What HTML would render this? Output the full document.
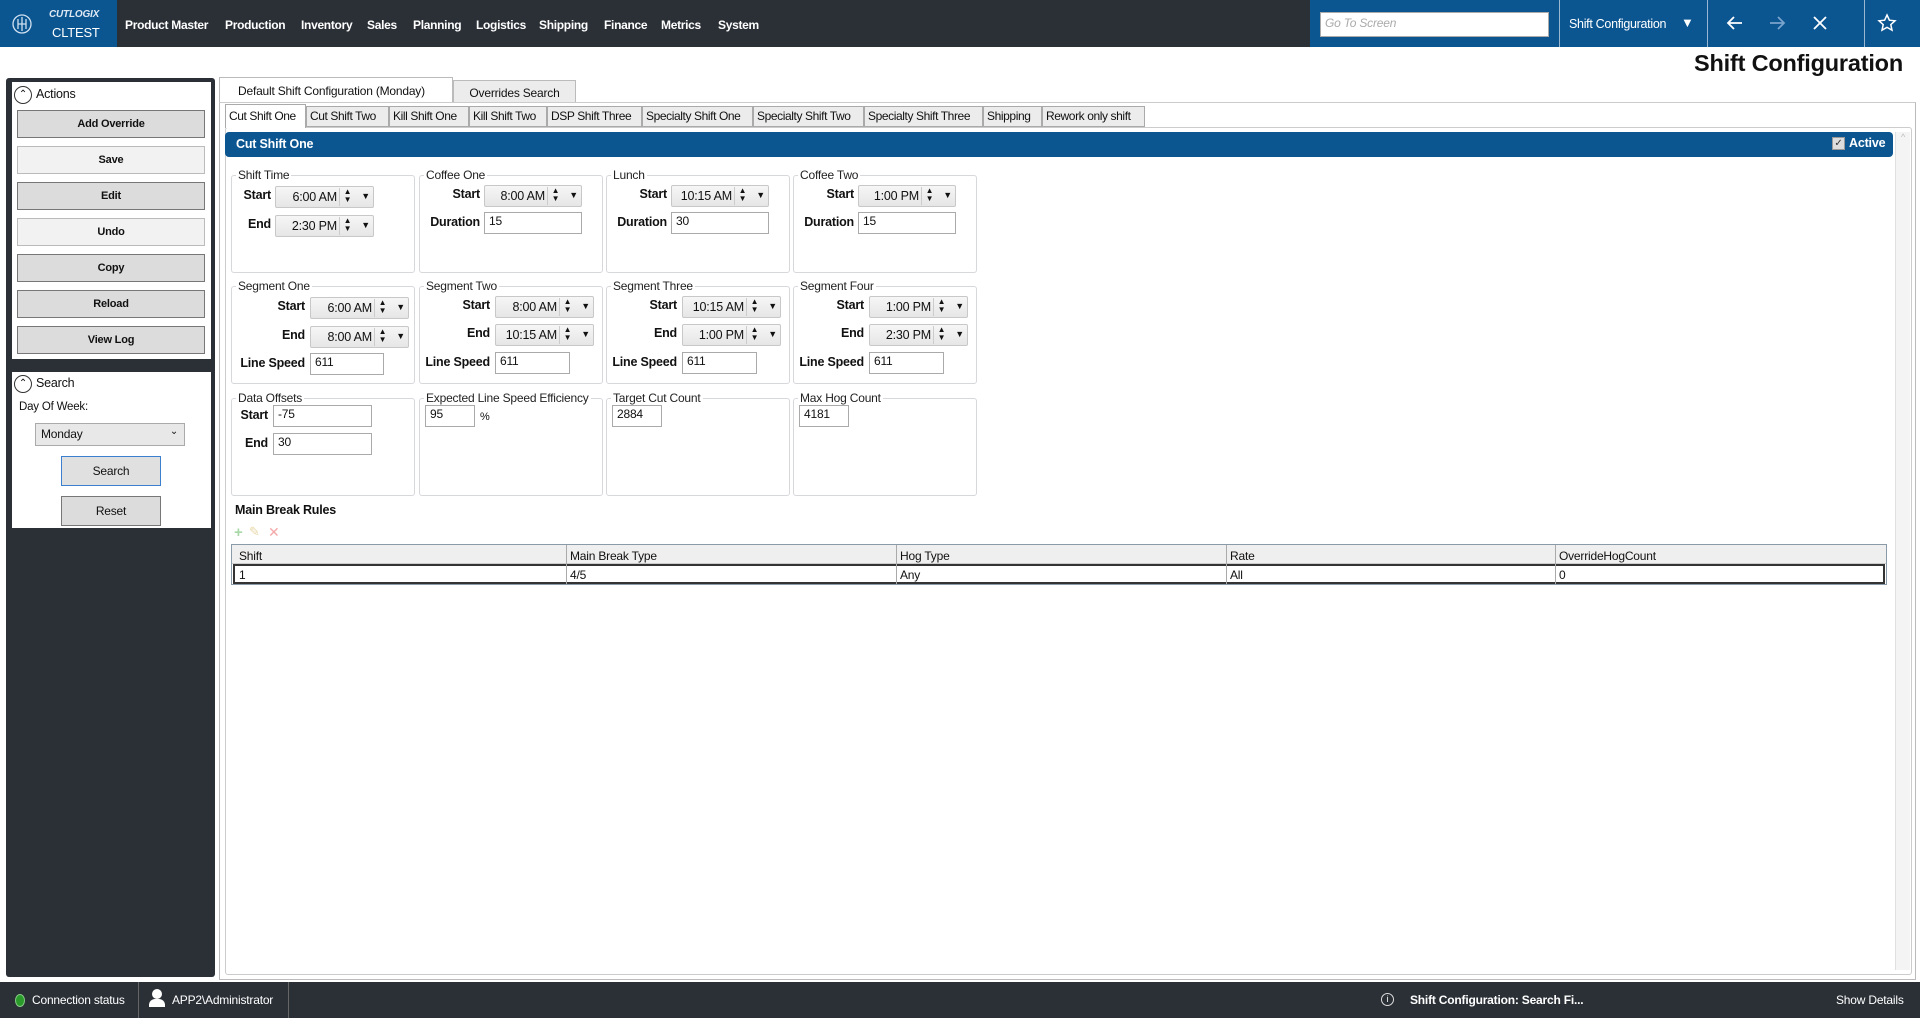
<!DOCTYPE html>
<html><head><meta charset="utf-8"><style>
*{box-sizing:border-box;margin:0;padding:0}
body{width:1920px;height:1018px;position:relative;background:#fff;font-family:"Liberation Sans",sans-serif;font-size:12px;color:#111;overflow:hidden;letter-spacing:-0.2px;white-space:nowrap}
.a{position:absolute}
.top{left:0;top:0;width:1920px;height:47px;background:#2b3037}
.menu{top:18px;color:#fff;font-weight:bold;font-size:12px;letter-spacing:-0.3px}
.blue{background:#0b5591}
.btn{position:absolute;left:17px;width:188px;height:28px;border:1px solid #777;background:#dcdcdc;font-weight:bold;font-size:11px;text-align:center;line-height:26px}
.btn.l{background:#f2f2f2;border-color:#bbb}
.gb{position:absolute;width:184px;height:105px}
.gb .fr{position:absolute;left:0;top:7px;right:0;bottom:0;border:1px solid #d6d8dc;border-radius:3px}
.gb .lg{position:absolute;left:5px;top:0;background:#fff;padding:0 2px;font-size:12px;color:#222}
.lb{position:absolute;font-weight:bold;font-size:12.5px;text-align:right}
.tb{position:absolute;height:22px;border:1px solid #c8c8c8;background:linear-gradient(#f6f6f6,#e6e6e6);border-radius:2px}
.tb .v{position:absolute;right:36px;top:3px;font-size:12.5px}
.tb .sp{position:absolute;right:18px;top:1px;width:16px;height:18px;border-left:1px solid #ccc;font-size:8px;line-height:8px;text-align:center}
.tb .dd{position:absolute;right:3px;top:4px;font-size:9px}
.in{position:absolute;height:22px;border:1px solid #aaa;background:#fff;padding:1px 4px;font-size:12px}
.tab{position:absolute;top:106px;height:21px;border:1px solid #aaa;background:#ececec;font-size:12px;line-height:19px;padding:0 3px;white-space:nowrap;letter-spacing:-0.4px}
.st{color:#fff;font-size:12px;top:993px}
</style></head><body>
<div class="a top"></div>
<div class="a blue" style="left:0;top:0;width:117px;height:47px"></div>
<svg class="a" style="left:10px;top:12px" width="24" height="24" viewBox="0 0 24 24" fill="none" stroke="#cfe0f0" stroke-width="1.3"><circle cx="12" cy="12" r="9"/><path d="M8 7v10M12 5v14M16 7v10M8 12h8"/></svg>
<div class="a" style="left:49px;top:9px;color:#dfe9f4;font-weight:bold;font-style:italic;font-size:10px">CUTLOGIX</div>
<div class="a" style="left:52px;top:25px;color:#fff;font-size:13px">CLTEST</div>
<div class="a menu" style="left:125px">Product Master</div>
<div class="a menu" style="left:225px">Production</div>
<div class="a menu" style="left:301px">Inventory</div>
<div class="a menu" style="left:367px">Sales</div>
<div class="a menu" style="left:413px">Planning</div>
<div class="a menu" style="left:476px">Logistics</div>
<div class="a menu" style="left:539px">Shipping</div>
<div class="a menu" style="left:604px">Finance</div>
<div class="a menu" style="left:661px">Metrics</div>
<div class="a menu" style="left:718px">System</div>
<div class="a blue" style="left:1310px;top:0;width:610px;height:47px"></div>
<div class="a" style="left:1320px;top:12px;width:229px;height:25px;background:#fff;border:1px solid #aaa;color:#aaa;font-style:italic;padding:3px 4px;font-size:12px">Go To Screen</div>
<div class="a" style="left:1559px;top:0;width:1px;height:47px;background:#9bb6d0"></div>
<div class="a" style="left:1569px;top:17px;color:#fff;font-size:12.5px;letter-spacing:-0.3px">Shift Configuration</div>
<div class="a" style="left:1681px;top:15px;color:#fff;font-size:13px">▼</div>
<div class="a" style="left:1707px;top:0;width:1px;height:47px;background:#9bb6d0"></div>
<svg class="a" style="left:1726px;top:14px" width="18" height="18" viewBox="0 0 18 18" fill="none" stroke="#fff" stroke-width="1.8"><path d="M16 9H2M8 3L2 9l6 6"/></svg>
<svg class="a" style="left:1768px;top:14px" width="18" height="18" viewBox="0 0 18 18" fill="none" stroke="#7aa4cc" stroke-width="1.8"><path d="M2 9h14M10 3l6 6-6 6"/></svg>
<svg class="a" style="left:1812px;top:15px" width="16" height="16" viewBox="0 0 16 16" fill="none" stroke="#fff" stroke-width="1.8"><path d="M2 2l12 12M14 2L2 14"/></svg>
<div class="a" style="left:1864px;top:0;width:1px;height:47px;background:#9bb6d0"></div>
<svg class="a" style="left:1877px;top:13px" width="20" height="20" viewBox="0 0 20 20" fill="none" stroke="#fff" stroke-width="1.5"><path d="M10 2l2.4 5.2 5.6.6-4.2 3.8 1.2 5.6L10 14.4 5 17.2l1.2-5.6L2 7.8l5.6-.6z"/></svg>
<div class="a" style="right:17px;top:50px;font-weight:bold;font-size:23.5px">Shift Configuration</div>

<div class="a" style="left:6px;top:78px;width:209px;height:899px;background:#2b3037;border-radius:3px"></div>
<div class="a" style="left:12px;top:82px;width:199px;height:277px;background:#fff"></div>
<div class="a" style="left:14px;top:86px;width:18px;height:18px;border:1px solid #333;border-radius:50%;font-size:10px;text-align:center;line-height:15px">⌃</div>
<div class="a" style="left:36px;top:87px;font-size:12.5px">Actions</div>
<div class="btn" style="top:110px">Add Override</div>
<div class="btn l" style="top:146px">Save</div>
<div class="btn" style="top:182px">Edit</div>
<div class="btn l" style="top:218px">Undo</div>
<div class="btn" style="top:254px">Copy</div>
<div class="btn" style="top:290px">Reload</div>
<div class="btn" style="top:326px">View Log</div>
<div class="a" style="left:12px;top:372px;width:199px;height:156px;background:#fff"></div>
<div class="a" style="left:14px;top:375px;width:18px;height:18px;border:1px solid #333;border-radius:50%;font-size:10px;text-align:center;line-height:15px">⌃</div>
<div class="a" style="left:36px;top:376px;font-size:12.5px">Search</div>
<div class="a" style="left:19px;top:401px;font-size:11.5px">Day Of Week:</div>
<div class="a" style="left:35px;top:423px;width:150px;height:23px;border:1px solid #aaa;background:#e8e8e8;padding:3px 5px;font-size:12px">Monday<span style="position:absolute;right:6px;top:2px;font-size:10px">⌄</span></div>
<div class="a" style="left:61px;top:456px;width:100px;height:30px;border:1px solid #3b7fd0;background:#e0e0e0;text-align:center;line-height:28px;font-size:12px">Search</div>
<div class="a" style="left:61px;top:496px;width:100px;height:30px;border:1px solid #777;background:#dcdcdc;text-align:center;line-height:28px;font-size:12px">Reset</div>

<div class="a" style="left:219px;top:77px;width:234px;height:26px;background:#fff;border:1px solid #bbb;border-bottom:none;font-size:12px;padding:6px 18px">Default Shift Configuration (Monday)</div>
<div class="a" style="left:453px;top:80px;width:123px;height:23px;background:#ececec;border:1px solid #bbb;font-size:12px;padding:5px 0;text-align:center">Overrides Search</div>
<div class="a" style="left:219px;top:102px;width:1697px;height:878px;border:1px solid #bbb;border-top-color:#ccc"></div>
<div class="a" style="left:225px;top:127px;width:1687px;height:848px;border:1px solid #ccc;border-radius:3px"></div>
<div class="tab" style="left:225px;top:104px;height:24px;background:#fff;border-bottom:none;width:81px;line-height:22px">Cut Shift One</div>
<div class="tab" style="left:306px;width:83px">Cut Shift Two</div>
<div class="tab" style="left:389px;width:80px">Kill Shift One</div>
<div class="tab" style="left:469px;width:78px">Kill Shift Two</div>
<div class="tab" style="left:547px;width:95px">DSP Shift Three</div>
<div class="tab" style="left:642px;width:111px">Specialty Shift One</div>
<div class="tab" style="left:753px;width:111px">Specialty Shift Two</div>
<div class="tab" style="left:864px;width:119px">Specialty Shift Three</div>
<div class="tab" style="left:983px;width:59px">Shipping</div>
<div class="tab" style="left:1042px;width:103px">Rework only shift</div>
<div class="a" style="left:225px;top:132px;width:1668px;height:25px;background:#0b5591;border-radius:4px"></div>
<div class="a" style="left:236px;top:137px;color:#fff;font-weight:bold;font-size:12.5px">Cut Shift One</div>
<div class="a" style="left:1832px;top:137px;width:13px;height:13px;background:#ddd;border:1px solid #999;font-size:10px;line-height:11px;text-align:center;color:#333">✓</div>
<div class="a" style="left:1849px;top:136px;color:#fff;font-weight:bold;font-size:12.5px">Active</div>
<div class="a" style="left:1895px;top:132px;width:15px;height:838px;background:#f4f4f4;border-left:1px solid #e0e0e0;color:#bbb;font-size:9px;text-align:center">^</div>

<!-- Row 1 -->
<div class="gb" style="left:231px;top:168px"><div class="fr"></div><div class="lg">Shift Time</div>
<div class="lb" style="right:144px;top:20px">Start</div><div class="tb" style="left:44px;top:18px;width:99px"><span class="v">6:00 AM</span><span class="sp">▲<br>▼</span><span class="dd">▼</span></div>
<div class="lb" style="right:144px;top:49px">End</div><div class="tb" style="left:44px;top:47px;width:99px"><span class="v">2:30 PM</span><span class="sp">▲<br>▼</span><span class="dd">▼</span></div></div>
<div class="gb" style="left:419px;top:168px"><div class="fr"></div><div class="lg">Coffee One</div>
<div class="lb" style="right:123px;top:19px">Start</div><div class="tb" style="left:65px;top:17px;width:98px"><span class="v">8:00 AM</span><span class="sp">▲<br>▼</span><span class="dd">▼</span></div>
<div class="lb" style="right:123px;top:47px">Duration</div><div class="in" style="left:65px;top:44px;width:98px">15</div></div>
<div class="gb" style="left:606px;top:168px"><div class="fr"></div><div class="lg">Lunch</div>
<div class="lb" style="right:123px;top:19px">Start</div><div class="tb" style="left:65px;top:17px;width:98px"><span class="v">10:15 AM</span><span class="sp">▲<br>▼</span><span class="dd">▼</span></div>
<div class="lb" style="right:123px;top:47px">Duration</div><div class="in" style="left:65px;top:44px;width:98px">30</div></div>
<div class="gb" style="left:793px;top:168px"><div class="fr"></div><div class="lg">Coffee Two</div>
<div class="lb" style="right:123px;top:19px">Start</div><div class="tb" style="left:65px;top:17px;width:98px"><span class="v">1:00 PM</span><span class="sp">▲<br>▼</span><span class="dd">▼</span></div>
<div class="lb" style="right:123px;top:47px">Duration</div><div class="in" style="left:65px;top:44px;width:98px">15</div></div>

<!-- Row 2 -->
<div class="gb" style="left:231px;top:279px"><div class="fr"></div><div class="lg">Segment One</div>
<div class="lb" style="right:110px;top:20px">Start</div><div class="tb" style="left:79px;top:18px;width:99px"><span class="v">6:00 AM</span><span class="sp">▲<br>▼</span><span class="dd">▼</span></div>
<div class="lb" style="right:110px;top:49px">End</div><div class="tb" style="left:79px;top:47px;width:99px"><span class="v">8:00 AM</span><span class="sp">▲<br>▼</span><span class="dd">▼</span></div>
<div class="lb" style="right:110px;top:77px">Line Speed</div><div class="in" style="left:79px;top:74px;width:74px">611</div></div>
<div class="gb" style="left:419px;top:279px"><div class="fr"></div><div class="lg">Segment Two</div>
<div class="lb" style="right:113px;top:19px">Start</div><div class="tb" style="left:76px;top:17px;width:99px"><span class="v">8:00 AM</span><span class="sp">▲<br>▼</span><span class="dd">▼</span></div>
<div class="lb" style="right:113px;top:47px">End</div><div class="tb" style="left:76px;top:45px;width:99px"><span class="v">10:15 AM</span><span class="sp">▲<br>▼</span><span class="dd">▼</span></div>
<div class="lb" style="right:113px;top:76px">Line Speed</div><div class="in" style="left:76px;top:73px;width:75px">611</div></div>
<div class="gb" style="left:606px;top:279px"><div class="fr"></div><div class="lg">Segment Three</div>
<div class="lb" style="right:113px;top:19px">Start</div><div class="tb" style="left:76px;top:17px;width:99px"><span class="v">10:15 AM</span><span class="sp">▲<br>▼</span><span class="dd">▼</span></div>
<div class="lb" style="right:113px;top:47px">End</div><div class="tb" style="left:76px;top:45px;width:99px"><span class="v">1:00 PM</span><span class="sp">▲<br>▼</span><span class="dd">▼</span></div>
<div class="lb" style="right:113px;top:76px">Line Speed</div><div class="in" style="left:76px;top:73px;width:75px">611</div></div>
<div class="gb" style="left:793px;top:279px"><div class="fr"></div><div class="lg">Segment Four</div>
<div class="lb" style="right:113px;top:19px">Start</div><div class="tb" style="left:76px;top:17px;width:99px"><span class="v">1:00 PM</span><span class="sp">▲<br>▼</span><span class="dd">▼</span></div>
<div class="lb" style="right:113px;top:47px">End</div><div class="tb" style="left:76px;top:45px;width:99px"><span class="v">2:30 PM</span><span class="sp">▲<br>▼</span><span class="dd">▼</span></div>
<div class="lb" style="right:113px;top:76px">Line Speed</div><div class="in" style="left:76px;top:73px;width:75px">611</div></div>

<!-- Row 3 -->
<div class="gb" style="left:231px;top:391px"><div class="fr"></div><div class="lg">Data Offsets</div>
<div class="lb" style="right:147px;top:17px">Start</div><div class="in" style="left:42px;top:14px;width:99px">-75</div>
<div class="lb" style="right:147px;top:45px">End</div><div class="in" style="left:42px;top:42px;width:99px">30</div></div>
<div class="gb" style="left:419px;top:391px"><div class="fr"></div><div class="lg">Expected Line Speed Efficiency</div>
<div class="in" style="left:6px;top:14px;width:50px">95</div><div class="a" style="left:61px;top:20px;font-size:11px">%</div></div>
<div class="gb" style="left:606px;top:391px"><div class="fr"></div><div class="lg">Target Cut Count</div>
<div class="in" style="left:6px;top:14px;width:50px">2884</div></div>
<div class="gb" style="left:793px;top:391px"><div class="fr"></div><div class="lg">Max Hog Count</div>
<div class="in" style="left:6px;top:14px;width:50px">4181</div></div>

<div class="a" style="left:235px;top:503px;font-weight:bold;font-size:12.5px">Main Break Rules</div>
<div class="a" style="left:234px;top:524px;color:#a8d8a8;font-size:15px;font-weight:bold">+</div>
<div class="a" style="left:249px;top:524px;color:#e8d8a8;font-size:13px">✎</div>
<div class="a" style="left:268px;top:524px;color:#f4a8a8;font-size:14px">✕</div>
<div class="a" style="left:231px;top:544px;width:1656px;height:41px;border:1px solid #8a9aa8;background:#fff"></div>
<div class="a" style="left:232px;top:545px;width:1654px;height:19px;background:#efefef;border-bottom:1px solid #ccc"></div>
<div class="a" style="left:233px;top:564px;width:1652px;height:20px;border:2px solid #333"></div>
<div class="a" style="left:566px;top:545px;width:1px;height:39px;background:#aaa"></div>
<div class="a" style="left:896px;top:545px;width:1px;height:39px;background:#aaa"></div>
<div class="a" style="left:1226px;top:545px;width:1px;height:39px;background:#aaa"></div>
<div class="a" style="left:1555px;top:545px;width:1px;height:39px;background:#aaa"></div>
<div class="a" style="left:239px;top:549px">Shift</div><div class="a" style="left:570px;top:549px">Main Break Type</div><div class="a" style="left:900px;top:549px">Hog Type</div><div class="a" style="left:1230px;top:549px">Rate</div><div class="a" style="left:1559px;top:549px">OverrideHogCount</div>
<div class="a" style="left:239px;top:568px">1</div><div class="a" style="left:570px;top:568px">4/5</div><div class="a" style="left:900px;top:568px">Any</div><div class="a" style="left:1230px;top:568px">All</div><div class="a" style="left:1559px;top:568px">0</div>

<div class="a" style="left:0;top:982px;width:1920px;height:36px;background:#2b3037"></div>
<div class="a" style="left:15px;top:994px;width:10px;height:13px;border-radius:50%;background:#2a9a2a;border:1px solid #8c8"></div>
<div class="a st" style="left:32px">Connection status</div>
<div class="a" style="left:138px;top:982px;width:1px;height:36px;background:#666"></div>
<div class="a" style="left:152px;top:989px;width:10px;height:10px;border-radius:50%;background:#fff"></div>
<div class="a" style="left:149px;top:999px;width:16px;height:8px;border-radius:6px 6px 0 0;background:#fff"></div>
<div class="a st" style="left:172px">APP2\Administrator</div>
<div class="a" style="left:288px;top:982px;width:1px;height:36px;background:#666"></div>
<div class="a" style="left:1381px;top:993px;width:13px;height:13px;border:1px solid #ddd;border-radius:50%;color:#fff;font-size:9px;text-align:center;line-height:11px">i</div>
<div class="a st" style="left:1410px;font-weight:bold">Shift Configuration: Search Fi...</div>
<div class="a st" style="left:1836px">Show Details</div>
</body></html>
